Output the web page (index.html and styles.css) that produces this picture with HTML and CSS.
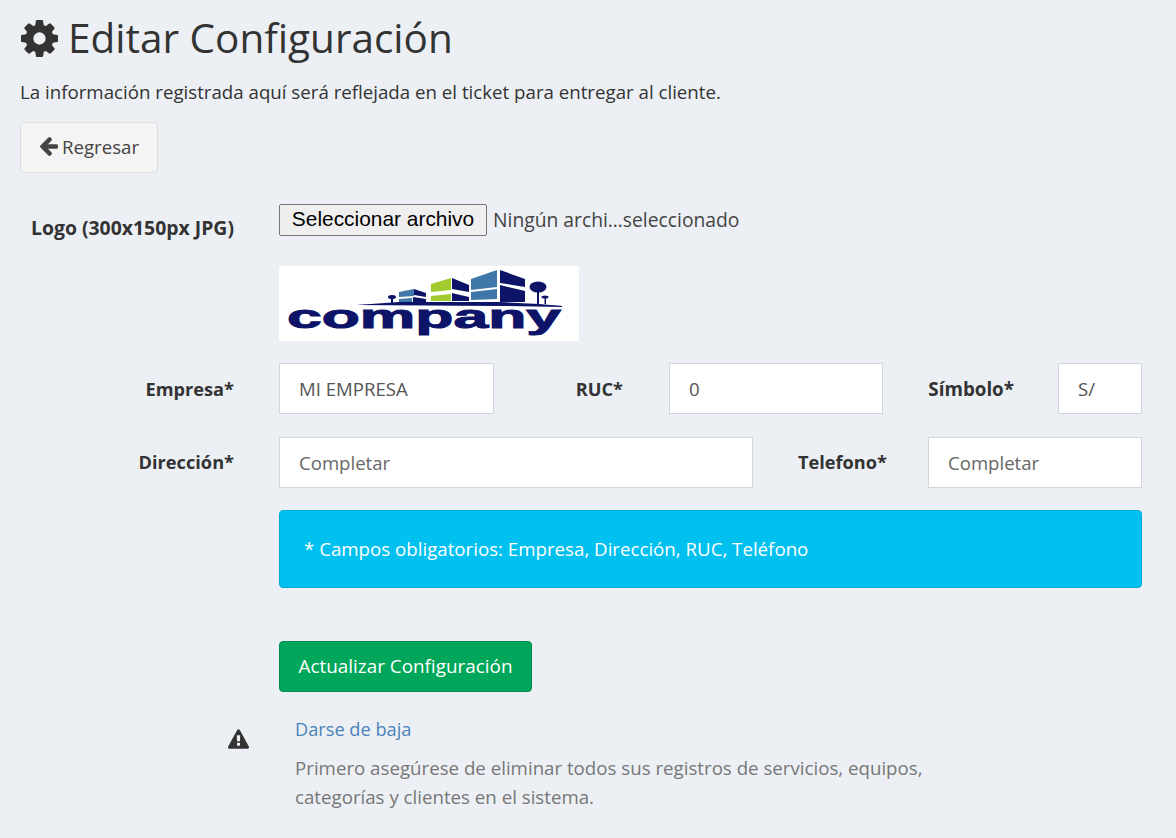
FILE: index.html
```html
<!DOCTYPE html>
<html lang="es">
<head>
<meta charset="utf-8">
<title>Editar Configuración</title>
<link rel="stylesheet" href="styles.css">
</head>
<body>
<main class="page">
  <h1 class="title">
    <svg class="title-icon" viewBox="128 128 1536 1536" aria-hidden="true"><path d="M1152 896q0-106-75-181t-181-75-181 75-75 181 75 181 181 75 181-75 75-181zm512-109v222q0 12-8 23t-20 13l-185 28q-19 54-39 91 35 50 107 138 10 12 10 25t-9 23q-27 37-99 108t-94 71q-12 0-26-9l-138-108q-44 23-91 38-16 136-29 186-7 28-36 28h-222q-14 0-24.500-8.500t-11.500-21.500l-28-184q-49-16-90-37l-141 107q-10 9-25 9-14 0-25-11-126-114-165-168-7-10-7-23 0-12 8-23 15-21 51-66.500t54-70.500q-27-50-41-99l-183-27q-13-2-21-12.500t-8-23.500v-222q0-12 8-23t19-13l186-28q14-46 39-92-40-57-107-138-10-12-10-24 0-10 9-23 26-36 98.500-107.500t94.500-71.500q13 0 26 10l138 107q44-23 91-38 16-136 29-186 7-28 36-28h222q14 0 24.500 8.500t11.500 21.500l28 184q49 16 90 37l142-107q9-9 24-9 13 0 25 10 129 119 165 170 7 8 7 22 0 12-8 23-15 21-51 66.500t-54 70.500q26 50 41 98l183 28q13 2 21 12.500t8 23.500z"/></svg>
    <span>Editar Configuración</span>
  </h1>
  <p class="intro">La información registrada aquí será reflejada en el ticket para entregar al cliente.</p>
  <a class="btn btn-back" href="#">
    <svg class="back-icon" viewBox="192 180 1472 1560" aria-hidden="true"><path d="M1664 896v128q0 53-32.500 90.500t-84.500 37.500h-704l293 294q38 36 38 90t-38 90l-75 76q-38 38-90 38-53 0-91-38l-651-652q-37-37-37-90 0-52 37-91l651-650q38-38 91-38 52 0 90 38l75 74q38 38 38 91t-38 91l-293 293h704q52 0 84.500 37.500t32.500 90.500z"/></svg>
    Regresar
  </a>

  <form class="form">
    <div class="row row-file">
      <label class="label label-logo">Logo (300x150px JPG)</label>
      <div class="file-field">
        <button class="file-btn" type="button">Seleccionar archivo</button>
        <span class="file-name">Ningún archi…seleccionado</span>
      </div>
    </div>

    <div class="row row-logo">
      <div class="label"></div>
      <svg class="logo" viewBox="0 0 300 75" role="img" aria-label="company">
        <rect width="300" height="75" fill="#fff"/>
        <path fill="#3e77a8" d="M120 26l15-3v7l-15 1zM120 33l13-1v5h-13zM192 13l26-9v17l-26 3zM192 26l26-3v10l-26 1z"/>
        <path fill="#a2cb2f" d="M152 18l20-6v12l-20 2zM152 30l20-2v7h-20z"/>
        <path fill="#0d1468" d="M135 23l12 4v4l-12-2zM134 31l13 2v4h-13zM173 12l17 7v7l-17-3zM173 27l17 4v4h-17zM221 4l25 9v8l-25-4zM221 19l25 6v11h-25z"/>
        <ellipse cx="259" cy="21" rx="8.500" ry="5.500" fill="#0d1468"/><rect x="258" y="25" width="2" height="13" fill="#0d1468"/>
        <ellipse cx="113" cy="31" rx="4" ry="2" fill="#0d1468"/><rect x="112" y="32" width="2" height="6" fill="#0d1468"/>
        <ellipse cx="266" cy="31" rx="3.500" ry="1.500" fill="#0d1468"/><rect x="265.500" y="32" width="1.500" height="6" fill="#0d1468"/>
        <path fill="#0d1468" d="M78 39q100-5 205 1v1q-100-2-205-2z"/>
        <path fill="#0d1468" d="M120 36h100l40 2 23 2-205-1z"/>
        <text class="logo-text" x="8" y="62" textLength="274" lengthAdjust="spacingAndGlyphs">company</text>
      </svg>
    </div>

    <div class="row row-fields row-first">
      <label class="label">Empresa*</label>
      <input class="input w-empresa" type="text" value="MI EMPRESA">
      <label class="label w-ruc-label">RUC*</label>
      <input class="input w-ruc" type="text" value="0">
      <label class="label w-simbolo-label">Símbolo*</label>
      <input class="input w-simbolo" type="text" value="S/">
    </div>

    <div class="row row-fields row-second">
      <label class="label">Dirección*</label>
      <input class="input w-direccion" type="text" placeholder="Completar">
      <label class="label w-telefono-label">Telefono*</label>
      <input class="input w-telefono" type="text" placeholder="Completar">
    </div>

    <div class="row">
      <div class="label"></div>
      <div class="alert">* Campos obligatorios: Empresa, Dirección, RUC, Teléfono</div>
    </div>

    <div class="row row-submit">
      <div class="label"></div>
      <button class="btn btn-submit" type="button">Actualizar Configuración</button>
    </div>

    <div class="row row-warning">
      <div class="label warning-col">
        <svg class="warning-icon" viewBox="0 0 1792 1664" aria-hidden="true"><path d="M1024 1375v-190q0-14-9.500-23.500t-22.500-9.500h-192q-13 0-22.500 9.500t-9.500 23.500v190q0 14 9.500 23.500t22.500 9.500h192q13 0 22.500-9.500t9.500-23.500zm-2-374l18-459q0-12-10-19-13-11-24-11h-220q-11 0-24 11-10 7-10 21l17 457q0 10 10 16.500t24 6.500h185q14 0 23.500-6.500t10.500-16.500zm-14-934l768 1408q35 63-2 126-17 29-46.500 46t-63.500 17h-1536q-34 0-63.500-17t-46.500-46q-37-63-2-126l768-1408q17-31 47-49t65-18 65 18 47 49z"/></svg>
      </div>
      <div class="warning-text">
        <a class="link" href="#">Darse de baja</a>
        <p class="muted">Primero asegúrese de eliminar todos sus registros de servicios, equipos, categorías y clientes en el sistema.</p>
      </div>
    </div>
  </form>
</main>
</body>
</html>
```

FILE: styles.css
```css
* { box-sizing: border-box; }

html, body { margin: 0; height: 100%; }

body {
  background: #ecf0f5;
  color: #333;
  font-family: "Open Sans", "Noto Sans", sans-serif;
  font-size: 18.7px;
  line-height: 26px;
  overflow: hidden;
}

.page { padding: 10px 34px 0 20px; }

.title {
  display: flex;
  align-items: center;
  gap: 9px;
  margin: 0;
  height: 56px;
  font-size: 40.5px;
  font-weight: 400;
  line-height: 56px;
}

.title-icon { width: 37px; height: 37px; margin: 0 1px; fill: #333; flex: none; }

.intro { margin: 13px 0 17px; height: 26px; }

.btn {
  display: inline-flex;
  align-items: center;
  height: 51px;
  border-radius: 4px;
  font: inherit;
  text-decoration: none;
}

.btn-back {
  width: 138px;
  justify-content: center;
  gap: 4px;
  padding: 0 0 2px 1px;
  background: #f4f4f4;
  border: 1px solid #ddd;
  color: #444;
}

.back-icon { width: 18px; height: 19px; fill: #444; }

.form { margin-top: 31px; }

.row { display: flex; align-items: flex-start; }

.label {
  flex: none;
  width: 214px;
  margin-right: 45px;
  padding-top: 12px;
  font-size: 18.2px;
  font-weight: 700;
  text-align: right;
}

.row-file { height: 62px; }

.label-logo { padding-top: 11px; font-size: 19.400px; white-space: nowrap; }

.file-field { display: flex; align-items: center; gap: 6px; }

.file-btn {
  width: 208px;
  height: 32px;
  padding: 0 0 2px;
  background: #efefef;
  border: 1px solid #767676;
  border-radius: 2px;
  color: #000;
  font-family: "Liberation Sans", Arial, sans-serif;
  font-size: 20.900px;
}

.file-name { font-size: 19.300px; color: #444; white-space: nowrap; }

.row-logo { height: 97px; }
.row-logo .label { padding: 0; }

.logo { width: 300px; height: 75px; display: block; }

.logo-text {
  font-family: "Liberation Sans", Arial, sans-serif;
  font-size: 34px;
  font-weight: 700;
  fill: #0d1468;
  stroke: #0d1468;
  stroke-width: 1px;
}

.row-first { height: 74px; }
.row-first .label { padding-top: 13px; }
.row-second { height: 73px; }

.input {
  flex: none;
  height: 51px;
  padding: 0 19px;
  background: #fff;
  border: 1px solid #d2d6de;
  border-radius: 0;
  color: #555;
  font-family: inherit;
  font-size: 18.600px;
  outline: none;
}

.input::placeholder { color: #666; opacity: 1; }

.w-empresa { width: 215px; }
.label.w-ruc-label { width: 129px; margin-right: 46px; }
.w-ruc { width: 214px; }
.label.w-simbolo-label { width: 131px; margin-right: 44px; font-size: 18.800px; }
.w-simbolo { width: 84px; }
.w-direccion { width: 474px; }
.label.w-telefono-label { width: 134px; margin-right: 41px; }
.w-telefono { width: 214px; }

.alert {
  flex: 1;
  height: 78px;
  display: flex;
  align-items: center;
  padding-left: 24px;
  background: #00c0ef;
  border: 1px solid #00acd6;
  border-radius: 4px;
  color: #fff;
}

.row-submit { margin-top: 53px; }
.row-submit .label { padding: 0; }

.btn-submit {
  width: 253px;
  justify-content: center;
  padding: 0 0 2px;
  background: #00a65a;
  border: 1px solid #008d4c;
  color: #fff;
  font-size: 18.900px;
}

.row-warning { margin-top: 24px; }

.warning-col { padding-top: 13px; line-height: 0; }

.warning-icon { width: 21px; height: 20px; fill: #333; margin-right: -15px; }

.warning-text { width: 660px; padding-left: 16px; }

.link { display: block; height: 26px; color: #4a83b8; font-size: 18.200px; text-decoration: none; }

.muted { margin: 11px 0 0; color: #777; line-height: 29px; }
```
